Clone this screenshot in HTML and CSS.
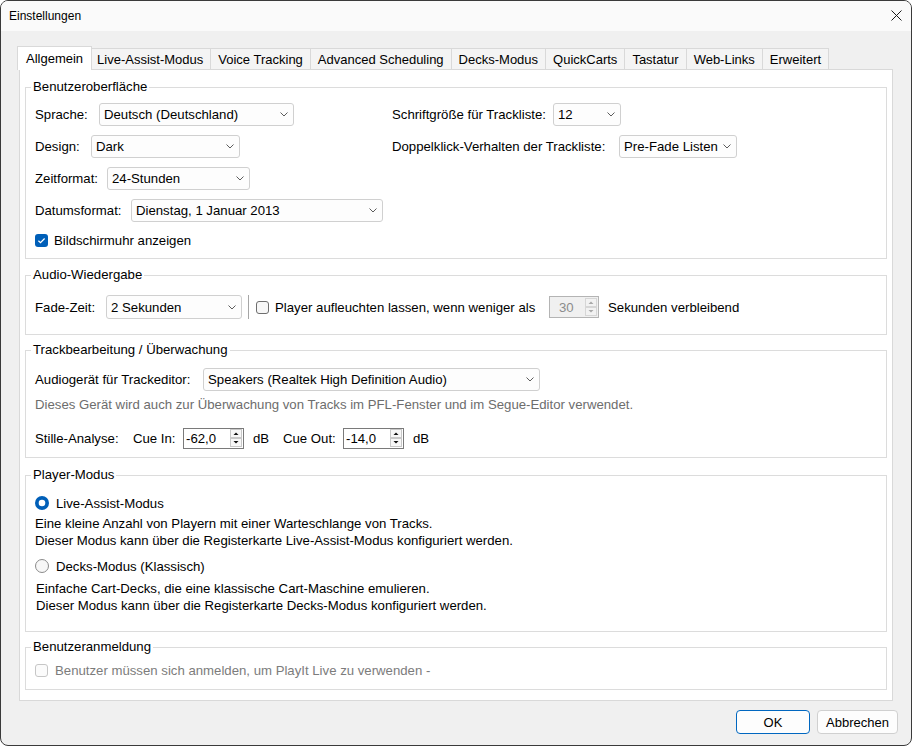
FILE: index.html
```html
<!DOCTYPE html>
<html lang="de">
<head>
<meta charset="utf-8">
<title>Einstellungen</title>
<link rel="stylesheet" href="styles.css">
</head>
<body>
<div class="window">
  <div class="titlebar">
    <span class="title">Einstellungen</span>
    <span class="close"><svg width="11" height="11" viewBox="0 0 11 11"><path d="M0.5 0.5L10.5 10.5M10.5 0.5L0.5 10.5" stroke="#1c1c1c" stroke-width="1"/></svg></span>
  </div>
  <div class="client">
    <div class="tabs">
      <div class="tab active">Allgemein</div>
      <div class="tab">Live-Assist-Modus</div>
      <div class="tab">Voice Tracking</div>
      <div class="tab">Advanced Scheduling</div>
      <div class="tab">Decks-Modus</div>
      <div class="tab">QuickCarts</div>
      <div class="tab">Tastatur</div>
      <div class="tab">Web-Links</div>
      <div class="tab">Erweitert</div>
    </div>
    <div class="panel">
      <div class="group g-ui">
        <div class="legend">Benutzeroberfläche</div>
        <div class="ui-grid">
          <div class="ui-col">
            <div class="row">
              <span class="lbl lbl-sprache">Sprache:</span>
              <div class="select sel-sprache"><span>Deutsch (Deutschland)</span><svg class="chev" width="8" height="5" viewBox="0 0 8 5"><path d="M0.5 0.5L4 4L7.5 0.5" fill="none" stroke="#5c5c5c" stroke-width="1"/></svg></div>
            </div>
            <div class="row">
              <span class="lbl lbl-design">Design:</span>
              <div class="select sel-design"><span>Dark</span><svg class="chev" width="8" height="5" viewBox="0 0 8 5"><path d="M0.5 0.5L4 4L7.5 0.5" fill="none" stroke="#5c5c5c" stroke-width="1"/></svg></div>
            </div>
            <div class="row">
              <span class="lbl lbl-zeit">Zeitformat:</span>
              <div class="select sel-zeit"><span>24-Stunden</span><svg class="chev" width="8" height="5" viewBox="0 0 8 5"><path d="M0.5 0.5L4 4L7.5 0.5" fill="none" stroke="#5c5c5c" stroke-width="1"/></svg></div>
            </div>
            <div class="row">
              <span class="lbl lbl-datum">Datumsformat:</span>
              <div class="select sel-datum"><span>Dienstag, 1 Januar 2013</span><svg class="chev" width="8" height="5" viewBox="0 0 8 5"><path d="M0.5 0.5L4 4L7.5 0.5" fill="none" stroke="#5c5c5c" stroke-width="1"/></svg></div>
            </div>
          </div>
          <div class="ui-col">
            <div class="row">
              <span class="lbl lbl-schrift">Schriftgröße für Trackliste:</span>
              <div class="select sel-schrift"><span>12</span><svg class="chev" width="8" height="5" viewBox="0 0 8 5"><path d="M0.5 0.5L4 4L7.5 0.5" fill="none" stroke="#5c5c5c" stroke-width="1"/></svg></div>
            </div>
            <div class="row">
              <span class="lbl lbl-doppel">Doppelklick-Verhalten der Trackliste:</span>
              <div class="select sel-doppel"><span>Pre-Fade Listen</span><svg class="chev" width="8" height="5" viewBox="0 0 8 5"><path d="M0.5 0.5L4 4L7.5 0.5" fill="none" stroke="#5c5c5c" stroke-width="1"/></svg></div>
            </div>
          </div>
        </div>
        <div class="check-row clock-row">
          <span class="cb cb-on"><svg width="13" height="13" viewBox="0 0 13 13"><path d="M3.4 6.7L5.5 8.7L9.6 4.5" fill="none" stroke="#fff" stroke-width="1.2"/></svg></span>
          <span>Bildschirmuhr anzeigen</span>
        </div>
      </div>

      <div class="group g-audio">
        <div class="legend">Audio-Wiedergabe</div>
        <div class="row row-fade">
          <span class="lbl lbl-fade">Fade-Zeit:</span>
          <div class="select sel-fade"><span>2 Sekunden</span><svg class="chev" width="8" height="5" viewBox="0 0 8 5"><path d="M0.5 0.5L4 4L7.5 0.5" fill="none" stroke="#5c5c5c" stroke-width="1"/></svg></div>
          <span class="vsep"></span>
          <span class="cb cb-off"></span>
          <span class="lbl lbl-player">Player aufleuchten lassen, wenn weniger als</span>
          <div class="spinner spinner-off">
            <span class="val">30</span>
            <svg class="spin" width="12" height="18" viewBox="0 0 12 18"><rect x="0.5" y="0.5" width="11" height="8" fill="#f2f2f2" stroke="#d6d6d6"/><rect x="0.5" y="9.5" width="11" height="8" fill="#f2f2f2" stroke="#d6d6d6"/><path d="M3.5 6L6 3.5L8.5 6Z" fill="#a8a8a8"/><path d="M3.5 12L6 14.5L8.5 12Z" fill="#a8a8a8"/></svg>
          </div>
          <span class="lbl lbl-sek">Sekunden verbleibend</span>
        </div>
      </div>

      <div class="group g-track">
        <div class="legend">Trackbearbeitung / Überwachung</div>
        <div class="row row-device">
          <span class="lbl lbl-device">Audiogerät für Trackeditor:</span>
          <div class="select sel-device"><span>Speakers (Realtek High Definition Audio)</span><svg class="chev" width="8" height="5" viewBox="0 0 8 5"><path d="M0.5 0.5L4 4L7.5 0.5" fill="none" stroke="#5c5c5c" stroke-width="1"/></svg></div>
        </div>
        <div class="note">Dieses Gerät wird auch zur Überwachung von Tracks im PFL-Fenster und im Segue-Editor verwendet.</div>
        <div class="row row-stille">
          <span class="lbl lbl-stille">Stille-Analyse:</span>
          <span class="lbl lbl-cuein">Cue In:</span>
          <div class="spinner">
            <span class="val">-62,0</span>
            <svg class="spin" width="12" height="18" viewBox="0 0 12 18"><rect x="0.5" y="0.5" width="11" height="8" fill="#f7f7f7" stroke="#c8c8c8"/><rect x="0.5" y="9.5" width="11" height="8" fill="#f7f7f7" stroke="#c8c8c8"/><path d="M3.5 6L6 3.5L8.5 6Z" fill="#111"/><path d="M3.5 12L6 14.5L8.5 12Z" fill="#111"/></svg>
          </div>
          <span class="lbl lbl-db">dB</span>
          <span class="lbl lbl-cueout">Cue Out:</span>
          <div class="spinner">
            <span class="val">-14,0</span>
            <svg class="spin" width="12" height="18" viewBox="0 0 12 18"><rect x="0.5" y="0.5" width="11" height="8" fill="#f7f7f7" stroke="#c8c8c8"/><rect x="0.5" y="9.5" width="11" height="8" fill="#f7f7f7" stroke="#c8c8c8"/><path d="M3.5 6L6 3.5L8.5 6Z" fill="#111"/><path d="M3.5 12L6 14.5L8.5 12Z" fill="#111"/></svg>
          </div>
          <span class="lbl lbl-db2">dB</span>
        </div>
      </div>

      <div class="group g-player">
        <div class="legend">Player-Modus</div>
        <div class="check-row radio-row radio-first">
          <svg class="radio" width="14" height="14" viewBox="0 0 14 14"><circle cx="7" cy="7" r="7" fill="#005fb8"/><circle cx="7" cy="7" r="3.3" fill="#fff"/></svg>
          <span>Live-Assist-Modus</span>
        </div>
        <div class="desc desc-first">
          <div>Eine kleine Anzahl von Playern mit einer Warteschlange von Tracks.</div>
          <div>Dieser Modus kann über die Registerkarte Live-Assist-Modus konfiguriert werden.</div>
        </div>
        <div class="check-row radio-row radio-second">
          <svg class="radio" width="14" height="14" viewBox="0 0 14 14"><circle cx="7" cy="7" r="6.5" fill="#f7f7f7" stroke="#8a8a8a" stroke-width="1"/></svg>
          <span>Decks-Modus (Klassisch)</span>
        </div>
        <div class="desc desc-second">
          <div>Einfache Cart-Decks, die eine klassische Cart-Maschine emulieren.</div>
          <div>Dieser Modus kann über die Registerkarte Decks-Modus konfiguriert werden.</div>
        </div>
      </div>

      <div class="group g-login">
        <div class="legend">Benutzeranmeldung</div>
        <div class="check-row login-row">
          <span class="cb cb-dis"></span>
          <span class="dis-text">Benutzer müssen sich anmelden, um PlayIt Live zu verwenden -</span>
        </div>
      </div>
    </div>
    <div class="buttons">
      <div class="btn btn-ok">OK</div>
      <div class="btn btn-cancel">Abbrechen</div>
    </div>
  </div>
</div>
</body>
</html>
```

FILE: styles.css
```css
* {
  box-sizing: border-box;
}

html,
body {
  margin: 0;
  padding: 0;
}

body {
  width: 912px;
  height: 746px;
  background: #ffffff;
  font-family: "Liberation Sans", Arial, sans-serif;
  font-size: 13.2px;
  color: #000000;
}

.window {
  width: 912px;
  height: 746px;
  border: 1px solid #3a3a3a;
  border-radius: 8px;
  overflow: hidden;
  background: #f0f0f0;
  display: flex;
  flex-direction: column;
}

/* title bar */
.titlebar {
  flex: none;
  height: 30px;
  background: #fafafa;
  display: flex;
  align-items: center;
  justify-content: space-between;
  padding: 0 9px 0 8px;
  font-size: 12px;
}

.close {
  display: flex;
  margin-top: -2px;
}

/* client area */
.client {
  flex: 1;
  display: flex;
  flex-direction: column;
  padding: 15px 13px 11px 18px;
}

.tabs {
  flex: none;
  height: 23px;
  margin-right: 5px;
  display: flex;
  align-items: flex-end;
  font-size: 13px;
}

.tab {
  height: 21px;
  padding: 0 7px;
  border: 1px solid #d9d9d9;
  border-bottom: none;
  background: #f4f4f4;
  display: flex;
  align-items: center;
  white-space: nowrap;
  margin-left: -1px;
}

.tab.active {
  height: 24px;
  margin: 0 -2px -1px -2px;
  padding: 0 8px;
  background: #ffffff;
  position: relative;
  z-index: 1;
}

.panel {
  flex: none;
  height: 632px;
  margin-right: 5px;
  background: #ffffff;
  border: 1px solid #d9d9d9;
  padding: 17px 5px 0 5px;
}

/* group boxes */
.group {
  border: 1px solid #dcdcdc;
  padding: 0 9px;
}

.legend {
  width: max-content;
  height: 16px;
  line-height: 16px;
  margin: -9px 0 0 -4px;
  padding: 0 2px;
  background: #ffffff;
}

.g-ui {
  padding-bottom: 10px;
}

.g-audio {
  margin-top: 16px;
  padding-bottom: 15px;
}

.g-track {
  margin-top: 15px;
  padding-bottom: 8px;
}

.g-player {
  margin-top: 17px;
  padding-bottom: 17px;
}

.g-login {
  margin-top: 15px;
  padding-bottom: 11px;
}

/* rows */
.ui-grid {
  display: grid;
  grid-template-columns: 357px 1fr;
  margin-top: 8px;
}

.row {
  display: flex;
  align-items: center;
  height: 23px;
}

.row + .row {
  margin-top: 9px;
}

.lbl {
  flex: none;
  white-space: nowrap;
}

.lbl-sprache { width: 64px; }
.lbl-design { width: 56px; }
.lbl-zeit { width: 72px; }
.lbl-datum { width: 96px; }
.lbl-schrift { width: 161px; }
.lbl-doppel { width: 227px; }
.lbl-fade { width: 71px; }
.lbl-player { width: 274px; }
.lbl-sek { margin-left: 9px; }
.lbl-device { width: 168px; }
.lbl-stille { width: 98px; }
.lbl-cuein { width: 50px; }
.lbl-db { width: 30px; margin-left: 9px; }
.lbl-cueout { width: 60px; }
.lbl-db2 { margin-left: 9px; }

/* combo boxes */
.select {
  flex: none;
  height: 23px;
  display: flex;
  align-items: center;
  padding: 0 5px 0 4px;
  border: 1px solid #d0d0d0;
  border-radius: 3px;
  background: #fdfdfd;
  white-space: nowrap;
}

.select .chev {
  flex: none;
  margin-left: auto;
}

.sel-sprache { width: 195px; }
.sel-design { width: 149px; }
.sel-zeit { width: 143px; }
.sel-datum { width: 252px; }
.sel-schrift { width: 68px; }
.sel-doppel { width: 118px; }
.sel-fade { width: 136px; height: 24px; }
.sel-device { width: 337px; }

/* checkboxes */
.check-row {
  display: flex;
  align-items: center;
  height: 16px;
}

.clock-row {
  margin-top: 10px;
}

.cb {
  flex: none;
  width: 13px;
  height: 13px;
  border-radius: 3px;
  display: flex;
  margin-right: 6px;
}

.cb-on {
  background: #005fb8;
}

.cb-off {
  border: 1px solid #6e6e6e;
  background: #f7f7f7;
  margin-left: 7px;
}

.cb-dis {
  border: 1px solid #c6c6c6;
  background: #fbfbfb;
}

.dis-text {
  color: #7c7c7c;
}

/* audio row */
.row-fade {
  height: 24px;
  margin-top: 12px;
}

.vsep {
  flex: none;
  width: 1px;
  height: 24px;
  margin-left: 6px;
  background: #a6a6a6;
}

/* spinners */
.spinner {
  flex: none;
  width: 61px;
  height: 21px;
  display: flex;
  align-items: center;
  padding: 0 1px 0 2px;
  border: 1px solid #7a7a7a;
  background: #ffffff;
}

.spinner .val {
  flex: 1;
}

.spinner .spin {
  flex: none;
}

.spinner-off {
  width: 50px;
  height: 22px;
  border-color: #b4b4b4;
  background: #f0f0f0;
  color: #8c8c8c;
  padding-left: 9px;
}

/* track group */
.row-device {
  margin-top: 10px;
}

.note {
  height: 16px;
  line-height: 16px;
  margin-top: 6px;
  color: #6d6d6d;
  white-space: nowrap;
}

.row-stille {
  height: 22px;
  margin-top: 14px;
}

/* player group */
.radio {
  flex: none;
  margin-right: 7px;
}

.radio-first {
  margin-top: 12px;
}

.radio-second {
  margin-top: 9px;
}

.desc {
  line-height: 17px;
  white-space: nowrap;
}

.desc-first {
  margin-top: 4px;
}

.desc-second {
  margin-top: 6px;
  padding-left: 1px;
}

/* login group */
.login-row {
  margin-top: 7px;
}

.login-row .cb {
  margin-right: 7px;
}

/* buttons */
.buttons {
  flex: none;
  display: flex;
  justify-content: flex-end;
  gap: 7px;
  margin-top: 9px;
  font-size: 13px;
}

.btn {
  height: 24px;
  display: flex;
  align-items: center;
  justify-content: center;
  border: 1px solid #d0d0d0;
  border-radius: 4px;
  background: #fdfdfd;
}

.btn-ok {
  width: 74px;
  border-color: #0067c0;
}

.btn-cancel {
  width: 81px;
}
```
